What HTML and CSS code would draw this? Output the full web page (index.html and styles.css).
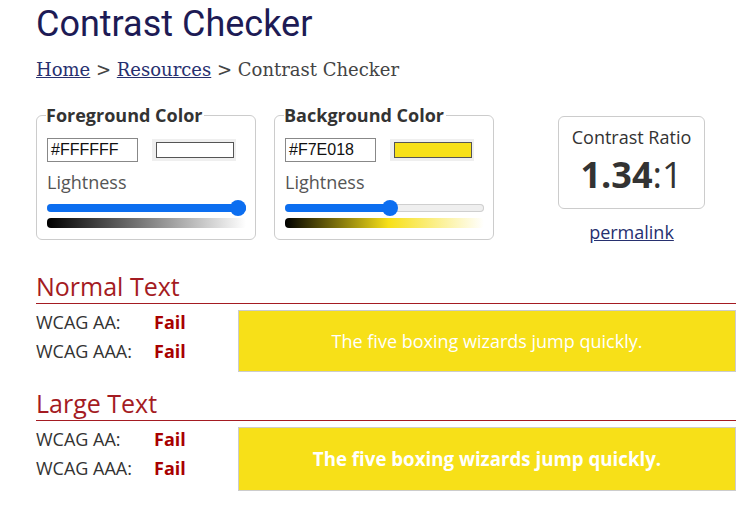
FILE: index.html
```html
<!DOCTYPE html>
<html lang="en">
<head>
  <meta charset="UTF-8" />
  <title>Contrast Checker</title>
  <link rel="stylesheet" href="styles.css">
</head>
<body>
  <div class="page">
    <h1 class="title">Contrast Checker</h1>
    <div class="crumbs">
      <a href="#">Home</a> &gt; <a href="#">Resources</a> &gt; Contrast Checker
    </div>

    <div class="pickers">
      <fieldset class="picker">
        <legend>Foreground Color</legend>
        <div class="hex-row">
          <div class="hex">#FFFFFF</div>
          <div class="swatch"><span class="swatch-fill fg"></span></div>
        </div>
        <div class="light-label">Lightness</div>
        <div class="slider">
          <div class="track"><div class="fill" style="width: 100%"></div></div>
          <div class="thumb" style="left: 100%"></div>
        </div>
        <div class="grad grad-fg"></div>
      </fieldset>

      <fieldset class="picker">
        <legend>Background Color</legend>
        <div class="hex-row">
          <div class="hex">#F7E018</div>
          <div class="swatch"><span class="swatch-fill bg"></span></div>
        </div>
        <div class="light-label">Lightness</div>
        <div class="slider">
          <div class="track"><div class="fill" style="width: 55%"></div></div>
          <div class="thumb" style="left: 55%"></div>
        </div>
        <div class="grad grad-bg"></div>
      </fieldset>

      <div class="ratio-col">
        <div class="ratio-box">
          <div class="ratio-label">Contrast Ratio</div>
          <div class="ratio-value"><b>1.34</b>:1</div>
        </div>
        <a href="#" class="permalink">permalink</a>
      </div>
    </div>

    <h2 class="section">Normal Text</h2>
    <div class="result">
      <div class="levels">
        <div class="level"><span class="lvl-name">WCAG AA:</span><span class="fail">Fail</span></div>
        <div class="level"><span class="lvl-name">WCAG AAA:</span><span class="fail">Fail</span></div>
      </div>
      <div class="sample">The five boxing wizards jump quickly.</div>
    </div>

    <h2 class="section section-large">Large Text</h2>
    <div class="result">
      <div class="levels">
        <div class="level"><span class="lvl-name">WCAG AA:</span><span class="fail">Fail</span></div>
        <div class="level"><span class="lvl-name">WCAG AAA:</span><span class="fail">Fail</span></div>
      </div>
      <div class="sample sample-large">The five boxing wizards jump quickly.</div>
    </div>
  </div>
</body>
</html>
```

FILE: styles.css
```css
html, body {
  margin: 0;
  padding: 0;
  background: #fff;
  font-family: "Open Sans", sans-serif;
  color: #333;
}

.page {
  padding: 0 17px 0 36px;
}

.title {
  margin: 0;
  padding-top: 3px;
  font-family: Roboto, sans-serif;
  font-weight: 400;
  font-size: 36px;
  line-height: 42px;
  color: #1d1b55;
}

.crumbs {
  margin-top: 13px;
  font-family: "DejaVu Serif", serif;
  font-size: 18px;
  line-height: 24px;
  color: #444;
}

.crumbs a {
  color: #27306f;
}

.pickers {
  display: flex;
  align-items: flex-start;
  margin-top: 21px;
}

.picker {
  width: 199px;
  margin: 0 18px 0 0;
  padding: 0 9px 11px 10px;
  border: 1px solid #ccc;
  border-radius: 6px;
}

.picker legend {
  padding: 0 2px 0 0;
  margin-left: -1px;
  font-weight: 700;
  font-size: 18px;
  line-height: 24px;
  color: #333;
}

.hex-row {
  display: flex;
  align-items: center;
  margin-top: 11px;
}

.hex {
  width: 86px;
  height: 22px;
  padding-left: 3px;
  border: 1px solid #888;
  font-family: "Liberation Sans", Arial, sans-serif;
  font-size: 16px;
  line-height: 22px;
  color: #111;
}

.swatch {
  display: flex;
  margin-left: 14px;
  padding: 3px 2px 3px 4px;
  background: #efefef;
}

.swatch-fill {
  width: 76px;
  height: 14px;
  border: 1px solid #555;
}

.swatch-fill.fg { background: #fff; }
.swatch-fill.bg { background: #f7e018; }

.light-label {
  margin-top: 8px;
  font-size: 18px;
  line-height: 24px;
  color: #555;
}

.slider {
  position: relative;
  height: 16px;
  margin: 6px 8px 0 0;
}

.track {
  position: absolute;
  left: 0;
  right: -8px;
  top: 4px;
  height: 8px;
  border-radius: 4px;
  background: #efefef;
  box-shadow: inset 0 0 0 1px #cfcfcf;
  overflow: hidden;
}

.fill {
  height: 100%;
  background: #0c6ef0;
}

.thumb {
  position: absolute;
  top: 0;
  width: 16px;
  height: 16px;
  margin-left: -8px;
  border-radius: 50%;
  background: #0c6ef0;
}

.grad {
  height: 10px;
  margin-top: 2px;
  border-radius: 4px;
}

.grad-fg {
  background: linear-gradient(to right, #000, #fff);
}

.grad-bg {
  background: linear-gradient(to right, #000, #f7e018 52%, #fff);
}

.ratio-col {
  display: flex;
  flex-direction: column;
  align-items: center;
  margin: 13px 0 0 46px;
}

.ratio-box {
  width: 145px;
  height: 91px;
  border: 1px solid #ccc;
  border-radius: 6px;
  text-align: center;
}

.ratio-label {
  margin-top: 8px;
  font-size: 18px;
  line-height: 24px;
}

.ratio-value {
  margin-top: 4px;
  font-size: 36px;
  line-height: 44px;
  color: #333;
}

.permalink {
  margin-top: 11px;
  font-size: 18px;
  line-height: 24px;
  color: #27306f;
}

.section {
  margin: 27px 0 0 0;
  padding-bottom: 1px;
  border-bottom: 1px solid #a41b22;
  font-weight: 400;
  font-size: 25px;
  line-height: 31px;
  color: #a41b22;
}

.section-large {
  margin-top: 16px;
}

.result {
  display: flex;
  align-items: flex-start;
  margin-top: 6px;
}

.levels {
  width: 202px;
  margin-top: -2px;
}

.level {
  display: flex;
  font-size: 18px;
  line-height: 29px;
}

.lvl-name {
  width: 118px;
}

.fail {
  font-weight: 700;
  color: #a80000;
}

.sample {
  flex: 1;
  height: 60px;
  border: 1px solid #ccc;
  background: #f7e018;
  color: #fff;
  font-size: 18px;
  line-height: 60px;
  text-align: center;
}

.sample-large {
  height: 62px;
  line-height: 62px;
  font-size: 18.7px;
  font-weight: 700;
}
```
